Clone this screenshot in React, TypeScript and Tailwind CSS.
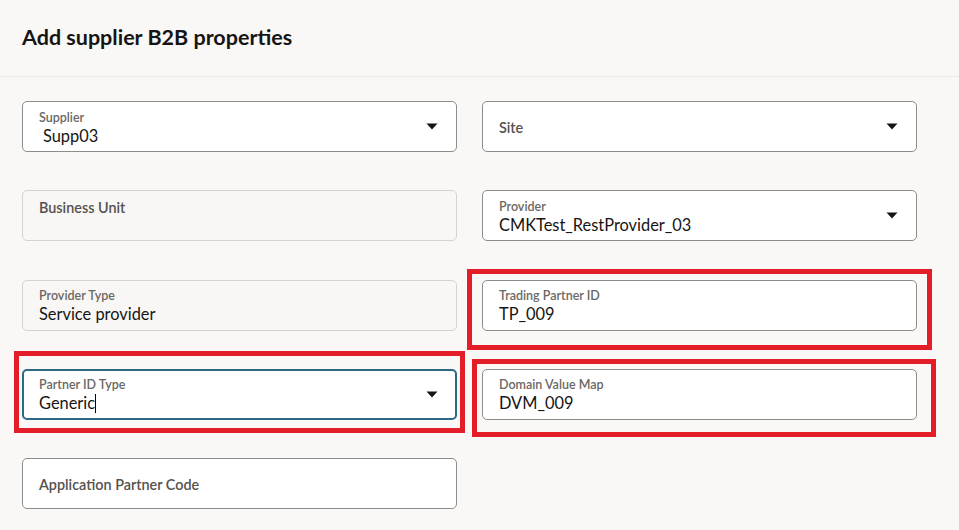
import React from 'react';

type FieldProps = {
  label: string;
  value?: string;
  select?: boolean;
  disabled?: boolean;
  focused?: boolean;
  indent?: boolean;
  children?: React.ReactNode;
};

const Caret = () => (
  <svg width="12" height="7" viewBox="0 0 12 7" className="shrink-0">
    <path d="M0.5 0.5 L11.5 0.5 L6 6.5 Z" fill="#161513" />
  </svg>
);

const Field = ({ label, value, select, disabled, focused, indent, children }: FieldProps) => {
  const border = focused
    ? 'border-2 border-[#2b6a80]'
    : disabled
      ? 'border border-[#d6d3ce]'
      : 'border border-[#8f8d89]';
  const bg = disabled ? 'bg-[#f8f7f5]' : 'bg-white';
  return (
    <div className="relative h-[51px]">
      <div className={`h-full flex items-center rounded-[5px] ${border} ${bg} ${focused ? 'pl-[15px] pr-[17px]' : 'pl-[16px] pr-[18px]'}`}>
        <div className="flex-1 min-w-0">
          {value !== undefined ? (
            <div className="flex flex-col pt-[2px]">
              <span className="text-[12.5px] leading-[15px] font-semibold text-[#6b6864]">{label}</span>
              <span className={`text-[16.4px] leading-[20px] mt-[1px] text-[#161513] ${indent ? 'pl-[4px]' : ''}`}>
                {value}
                {focused && <span className="inline-block w-px h-[19px] bg-black align-[-4px]" />}
              </span>
            </div>
          ) : (
            <span className={`text-[14.4px] font-semibold text-[#55524e] ${disabled ? 'relative top-[-9px]' : ''}`}>{label}</span>
          )}
        </div>
        {select && <Caret />}
      </div>
      {children}
    </div>
  );
};

export default function App() {
  return (
    <div className="w-[959px] h-[530px] overflow-hidden bg-[#f9f8f6] font-['Lato','Noto_Sans',sans-serif]">
      <div className="h-[77px] border-b border-[#ebe8e4] flex items-center pl-[22px] pb-[1px]">
        <h1 className="text-[21.5px] font-bold text-[#161513]">Add supplier B2B properties</h1>
      </div>
      <div className="pt-[24px] pl-[22px] grid grid-cols-[435px_435px] gap-x-[25px] gap-y-[38.25px]">
        <Field label="Supplier" value="Supp03" select indent />
        <Field label="Site" select />
        <Field label="Business Unit" disabled />
        <Field label="Provider" value="CMKTest_RestProvider_03" select />
        <Field label="Provider Type" value="Service provider" disabled />
        <Field label="Trading Partner ID" value="TP_009">
          <div className="absolute -left-[15px] -right-[15px] -top-[11px] -bottom-[19px] border-[5px] border-[#e31e26] pointer-events-none" />
        </Field>
        <Field label="Partner ID Type" value="Generic" select focused>
          <div className="absolute -left-[8px] -right-[8px] -top-[18px] -bottom-[13px] border-[5px] border-[#e31e26] pointer-events-none" />
        </Field>
        <Field label="Domain Value Map" value="DVM_009">
          <div className="absolute -left-[10px] -right-[19px] -top-[10px] -bottom-[17px] border-[5px] border-[#e31e26] pointer-events-none" />
        </Field>
        <Field label="Application Partner Code" />
      </div>
    </div>
  );
}
